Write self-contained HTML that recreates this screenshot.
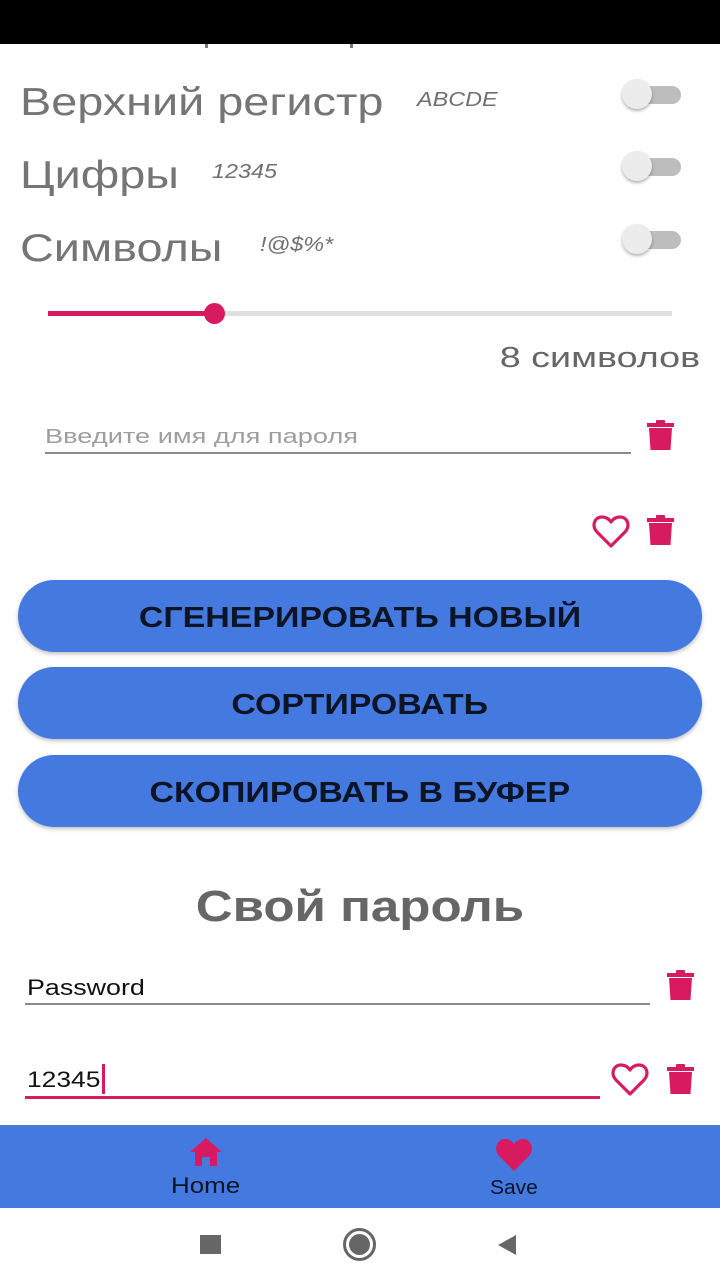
<!DOCTYPE html>
<html><head><meta charset="utf-8"><style>
*{margin:0;padding:0;box-sizing:border-box}
body{width:720px;height:1280px;position:relative;background:#fff;font-family:"Liberation Sans",sans-serif;overflow:hidden}
.a{position:absolute;white-space:nowrap}
.s{transform-origin:0 50%}
.lbl{font-size:39px;color:#757575;transform:scaleX(1.2)}
.ex{font-size:20px;color:#707070;font-style:italic;transform:scaleX(1.17)}
.tr{position:absolute;width:56px;height:18px;border-radius:9px;background:#bdbdbd}
.th{position:absolute;width:30px;height:30px;border-radius:50%;background:#ececec;box-shadow:0 2px 3px rgba(0,0,0,.3)}
.btn{position:absolute;left:18px;width:684px;height:72px;border-radius:36px;background:#4479e0;box-shadow:0 2px 4px rgba(0,0,0,.25);color:#0d1426;font-weight:bold;font-size:29px;text-align:center;line-height:76px}
.btn span{display:inline-block;transform:scaleX(1.17)}
</style></head><body>
<div class="a" style="left:0;top:0;width:720px;height:44px;background:#000"></div>
<div class="a" style="left:205px;top:44px;width:3px;height:4px;background:#777"></div>
<div class="a" style="left:350px;top:44px;width:3px;height:4px;background:#777"></div>

<div class="a lbl s" style="left:20px;top:81px">Верхний регистр</div>
<div class="a ex s" style="left:417px;top:89px">ABCDE</div>
<div class="a lbl s" style="left:20px;top:154px">Цифры</div>
<div class="a ex s" style="left:212px;top:161px">12345</div>
<div class="a lbl s" style="left:20px;top:227px">Символы</div>
<div class="a ex s" style="left:260px;top:234px">!@$%*</div>

<div class="tr" style="left:625px;top:86px"></div><div class="th" style="left:622px;top:79px"></div>
<div class="tr" style="left:625px;top:158px"></div><div class="th" style="left:622px;top:151px"></div>
<div class="tr" style="left:625px;top:231px"></div><div class="th" style="left:622px;top:224px"></div>

<div class="a" style="left:48px;top:311px;width:624px;height:5px;background:#e0e0e0"></div>
<div class="a" style="left:48px;top:311px;width:166px;height:5px;background:#d81b60"></div>
<div class="a" style="left:204px;top:303px;width:21px;height:21px;border-radius:50%;background:#d81b60"></div>
<div class="a" style="right:20px;top:342px;font-size:29px;color:#666;transform:scaleX(1.3);transform-origin:100% 50%">8 символов</div>

<div class="a s" style="left:45px;top:426px;font-size:20px;color:#9e9e9e;transform:scaleX(1.36)">Введите имя для пароля</div>
<div class="a" style="left:45px;top:452px;width:586px;height:2px;background:#8a8a8a"></div>

<svg class="a" style="left:646px;top:420px" width="30" height="32" viewBox="0 0 30 32"><rect x="1" y="3" width="27" height="4" fill="#d81b60"/><rect x="10" y="0" width="9" height="4" rx="1" fill="#d81b60"/><path d="M3 8h23l-1.5 22h-20z" fill="#d81b60"/></svg>
<svg class="a" style="left:646px;top:515px" width="30" height="32" viewBox="0 0 30 32"><rect x="1" y="3" width="27" height="4" fill="#d81b60"/><rect x="10" y="0" width="9" height="4" rx="1" fill="#d81b60"/><path d="M3 8h23l-1.5 22h-20z" fill="#d81b60"/></svg>
<svg class="a" style="left:592px;top:515px" width="38" height="34" viewBox="0 0 38 34"><path d="M19 31 L5 17 C-1 10 3 2 10 2 C14 2 17 4 19 7 C21 4 24 2 28 2 C35 2 39 10 33 17 Z" fill="none" stroke="#d81b60" stroke-width="3.2" stroke-linejoin="round"/></svg>

<div class="btn" style="top:580px"><span>СГЕНЕРИРОВАТЬ НОВЫЙ</span></div>
<div class="btn" style="top:667px"><span>СОРТИРОВАТЬ</span></div>
<div class="btn" style="top:755px"><span>СКОПИРОВАТЬ В БУФЕР</span></div>

<div class="a" style="left:0;width:720px;text-align:center;top:882px;font-size:44px;font-weight:bold;color:#666;transform:scaleX(1.16)">Свой пароль</div>

<div class="a s" style="left:27px;top:975px;font-size:22px;color:#111;transform:scaleX(1.22)">Password</div>
<div class="a" style="left:25px;top:1003px;width:625px;height:2px;background:#8a8a8a"></div>
<svg class="a" style="left:666px;top:970px" width="30" height="32" viewBox="0 0 30 32"><rect x="1" y="3" width="27" height="4" fill="#d81b60"/><rect x="10" y="0" width="9" height="4" rx="1" fill="#d81b60"/><path d="M3 8h23l-1.5 22h-20z" fill="#d81b60"/></svg>

<div class="a s" style="left:27px;top:1067px;font-size:22px;color:#111;transform:scaleX(1.2)">12345</div>
<div class="a" style="left:102px;top:1064px;width:3px;height:30px;background:#d81b60"></div>
<div class="a" style="left:25px;top:1096px;width:575px;height:3px;background:#d81b60"></div>
<svg class="a" style="left:611px;top:1063px" width="38" height="34" viewBox="0 0 38 34"><path d="M19 31 L5 17 C-1 10 3 2 10 2 C14 2 17 4 19 7 C21 4 24 2 28 2 C35 2 39 10 33 17 Z" fill="none" stroke="#d81b60" stroke-width="3.2" stroke-linejoin="round"/></svg>
<svg class="a" style="left:666px;top:1064px" width="30" height="32" viewBox="0 0 30 32"><rect x="1" y="3" width="27" height="4" fill="#d81b60"/><rect x="10" y="0" width="9" height="4" rx="1" fill="#d81b60"/><path d="M3 8h23l-1.5 22h-20z" fill="#d81b60"/></svg>

<div class="a" style="left:0;top:1125px;width:720px;height:83px;background:#4479e0"></div>
<svg class="a" style="left:188px;top:1137px" width="36" height="30" viewBox="0 0 36 30"><path d="M18 1 L2 15 H7 V29 H14 V20 H22 V29 H29 V15 H34 Z" fill="#d81b60"/></svg>
<div class="a s" style="left:171px;top:1173px;font-size:22px;color:#0d1426;transform:scaleX(1.18)">Home</div>
<svg class="a" style="left:494px;top:1138px" width="40" height="34" viewBox="0 0 40 34"><path d="M20 33 L5 18 C-1 11 3 1 11 1 C15 1 18 3 20 6 C22 3 25 1 29 1 C37 1 41 11 35 18 Z" fill="#d81b60"/></svg>
<div class="a s" style="left:490px;top:1177px;font-size:20px;color:#0d1426;transform:scaleX(1.05)">Save</div>

<div class="a" style="left:200px;top:1235px;width:21px;height:19px;background:#666"></div>
<div class="a" style="left:343px;top:1228px;width:33px;height:33px;border-radius:50%;border:3px solid #666"></div>
<div class="a" style="left:349px;top:1234px;width:21px;height:21px;border-radius:50%;background:#666"></div>
<svg class="a" style="left:496px;top:1234px" width="22" height="22" viewBox="0 0 22 22"><path d="M20 1 L20 21 L2 11 Z" fill="#666"/></svg>
</body></html>
